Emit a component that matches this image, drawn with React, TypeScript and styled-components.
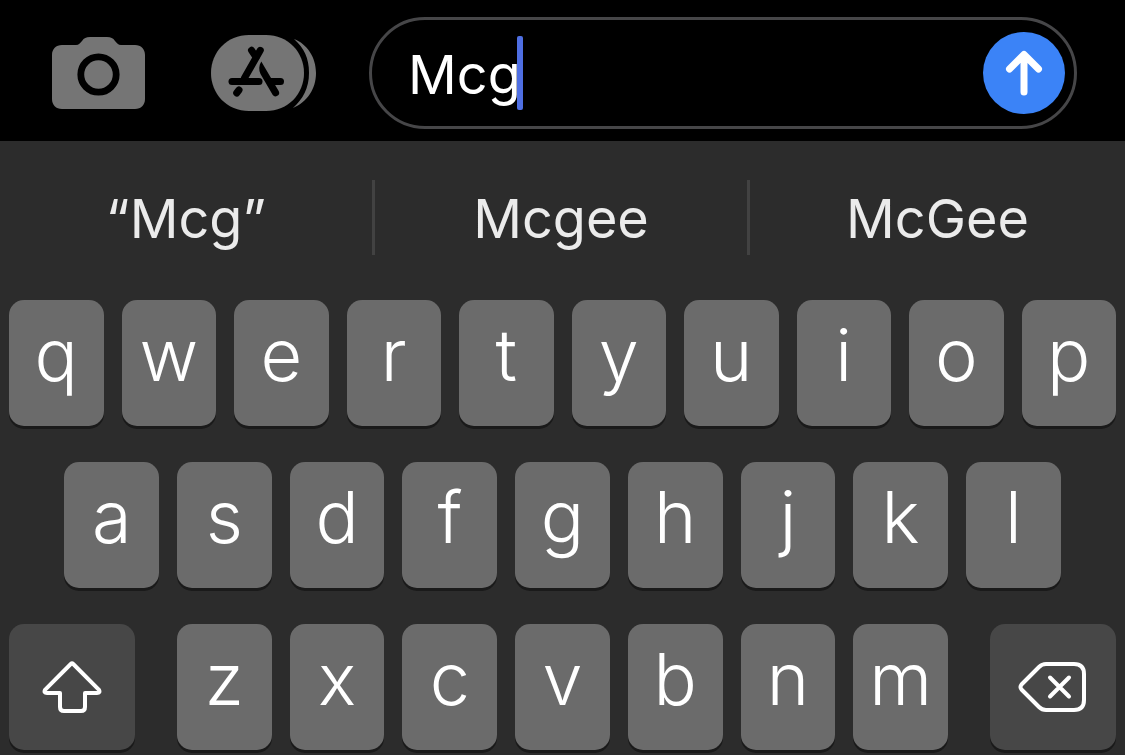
import React from "react";
import styled, { createGlobalStyle } from "styled-components";

const GlobalStyle = createGlobalStyle`
  *, *::before, *::after { box-sizing: border-box; }
  html, body { margin: 0; background: #2c2c2c; }
  body { font-family: Inter, "Liberation Sans", sans-serif; color: #fff; }
  button, input { font: inherit; color: inherit; border: 0; margin: 0; padding: 0; background: none; }
  button { cursor: pointer; }
  svg { display: block; }
`;

const Screen = styled.main`
  display: flex;
  flex-direction: column;
  min-height: 100vh;
  overflow: hidden;
`;

const ComposeBar = styled.form`
  display: flex;
  align-items: center;
  padding: 17px 48px 12px 52px;
  background: #000;
`;

const ToolButton = styled.button<{ $gap: number }>`
  flex: none;
  margin-right: ${(p) => p.$gap}px;
`;

const MessageField = styled.div`
  flex: 1;
  min-width: 0;
  height: 112px;
  display: flex;
  align-items: center;
  padding: 0 9px 0 36px;
  border: 3px solid #464648;
  border-radius: 56px;
`;

const MessageInput = styled.input`
  field-sizing: content;
  min-width: 8px;
  height: 76px;
  padding-top: 2px;
  font-size: 54px;
  line-height: 72px;
  outline: none;
  caret-color: transparent;
`;

const Caret = styled.span`
  flex: none;
  width: 6px;
  height: 74px;
  margin-left: -4px;
  border-radius: 2px;
  background: #4f6fe3;
`;

const SendButton = styled.button`
  flex: none;
  width: 82px;
  height: 82px;
  margin-left: auto;
  border-radius: 50%;
  background: #3b83f7;
`;

const Keyboard = styled.section`
  flex: 1;
  background: #2c2c2c;
`;

const Suggestions = styled.div`
  display: grid;
  grid-template-columns: repeat(3, 1fr);
  padding: 39px 0 45px;
`;

const Suggestion = styled.button`
  height: 75px;
  padding-top: 3px;
  font-size: 54px;
  line-height: 72px;
  color: #ebebeb;

  &:not(:last-child) {
    border-right: 3px solid #424242;
  }
`;

const Rows = styled.div`
  display: flex;
  flex-direction: column;
  gap: 36px;
  padding: 0 9px 5px;
`;

const KeyRow = styled.div<{ $inset?: boolean }>`
  display: flex;
  gap: 18px;
  padding: 0 ${(p) => (p.$inset ? "5%" : "0")};
`;

const BottomRow = styled.div`
  display: grid;
  grid-template-columns: 126fr 771fr 126fr;
  gap: 42px;
`;

const Key = styled.button<{ $dark?: boolean }>`
  flex: 1 1 0;
  min-width: 0;
  height: 126px;
  display: flex;
  justify-content: center;
  align-items: center;
  padding-bottom: ${(p) => (p.$dark ? 0 : 16)}px;
  border-radius: 15px;
  background: ${(p) => (p.$dark ? "#474747" : "#6b6b6b")};
  box-shadow: 0 3px 0 #1a1a1a;
  font-size: 72px;
  font-weight: 300;
  line-height: 88px;
`;

const CameraIcon = () => (
  <svg width="93" height="72" viewBox="0 0 93 72" aria-hidden="true">
    <path
      fill="#757575"
      d="M10 8H24C27 8 28 6 30 4C32 1 34 0 38 0H55C59 0 61 1 63 4C65 6 66 8 69 8H83C89 8 93 12 93 18V62C93 68 89 72 83 72H10C4 72 0 68 0 62V18C0 12 4 8 10 8Z"
    />
    <circle cx="46.500" cy="37.500" r="17.700" fill="none" stroke="#000" strokeWidth="6.800" />
  </svg>
);

const AppsIcon = () => (
  <svg width="106" height="76" viewBox="0 0 106 76" aria-hidden="true">
    <path fill="#757575" d="M83 4C96 9 105 22 105 38C105 54 96 67 82 73C92 64 98 53 98 38C98 23 93 13 83 4Z" />
    <path fill="#757575" d="M38 0H55C77 0 93 17 93 38C93 59 77 76 55 76H38C16 76 0 59 0 38C0 17 16 0 38 0Z" />
    <g fill="none" stroke="#000" strokeWidth="7" strokeLinecap="round">
      <path d="M49.300 15.300L33.500 43" />
      <path d="M40.500 15.300L45 22" />
      <path d="M21 46.500H48" />
      <path d="M59 46.500H69.500" />
      <path d="M28 55L25.700 58" />
    </g>
    <path
      fill="#000"
      d="M50.300 26.500L67.800 56.200A3.600 3.600 0 0 1 61.600 59.800L49.500 39C47.600 35 47.800 30.500 50.300 26.500Z"
    />
  </svg>
);

const ArrowIcon = () => (
  <svg width="82" height="82" viewBox="0 0 82 82" aria-hidden="true">
    <path
      d="M41 60V23M26.500 37L41 22.500L55.500 37"
      fill="none"
      stroke="#fff"
      strokeWidth="7"
      strokeLinecap="round"
      strokeLinejoin="round"
    />
  </svg>
);

const ShiftIcon = () => (
  <svg width="60" height="52" viewBox="0 0 60 52" aria-hidden="true">
    <path
      d="M28.800 3Q30 1.800 31.200 3L57 28.800Q58.500 32 55 32H43V46Q43 50 39 50H22Q18 50 18 46V32H5Q1.500 32 3 28.800Z"
      fill="none"
      stroke="#fff"
      strokeWidth="4"
      strokeLinejoin="round"
    />
  </svg>
);

const DeleteIcon = () => (
  <svg width="70" height="50" viewBox="0 0 70 50" aria-hidden="true">
    <g fill="none" stroke="#fff" strokeWidth="4" strokeLinecap="round" strokeLinejoin="round">
      <path d="M28 2H56Q66 2 66 12V38Q66 48 56 48H28Q24 48 21 45L3.500 27.500Q1.500 25 3.500 22.500L21 5Q24 2 28 2Z" />
      <path d="M32 15.500L51 34.500M51 15.500L32 34.500" />
    </g>
  </svg>
);

const suggestions = ["“Mcg”", "Mcgee", "McGee"];

const LetterKeys = ({ letters }: { letters: string }) => (
  <>
    {letters.split("").map((letter) => (
      <Key key={letter} type="button">
        {letter}
      </Key>
    ))}
  </>
);

export default function App() {
  const [text, setText] = React.useState("Mcg");
  return (
    <>
      <GlobalStyle />
      <Screen>
        <ComposeBar onSubmit={(e) => e.preventDefault()}>
          <ToolButton type="button" $gap={66} aria-label="Camera">
            <CameraIcon />
          </ToolButton>
          <ToolButton type="button" $gap={52} aria-label="Apps">
            <AppsIcon />
          </ToolButton>
          <MessageField>
            <MessageInput
              aria-label="Message"
              value={text}
              onChange={(e) => setText(e.target.value)}
            />
            <Caret />
            <SendButton type="submit" aria-label="Send">
              <ArrowIcon />
            </SendButton>
          </MessageField>
        </ComposeBar>
        <Keyboard aria-label="Keyboard">
          <Suggestions>
            {suggestions.map((word) => (
              <Suggestion key={word} type="button">
                {word}
              </Suggestion>
            ))}
          </Suggestions>
          <Rows>
            <KeyRow>
              <LetterKeys letters="qwertyuiop" />
            </KeyRow>
            <KeyRow $inset>
              <LetterKeys letters="asdfghjkl" />
            </KeyRow>
            <BottomRow>
              <Key type="button" $dark aria-label="Shift">
                <ShiftIcon />
              </Key>
              <KeyRow>
                <LetterKeys letters="zxcvbnm" />
              </KeyRow>
              <Key type="button" $dark aria-label="Delete">
                <DeleteIcon />
              </Key>
            </BottomRow>
          </Rows>
        </Keyboard>
      </Screen>
    </>
  );
}
